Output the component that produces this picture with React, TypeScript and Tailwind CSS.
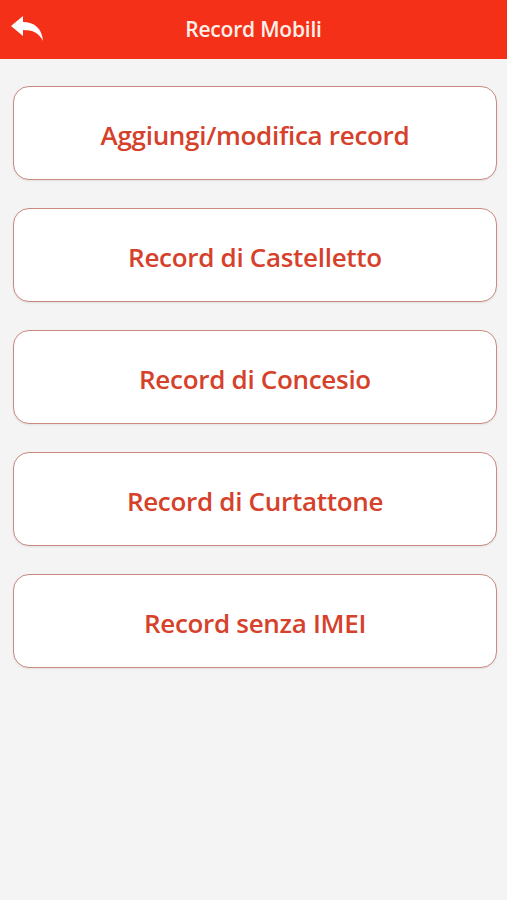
import React from 'react';

const items = [
    'Aggiungi/modifica record',
    'Record di Castelletto',
    'Record di Concesio',
    'Record di Curtattone',
    'Record senza IMEI',
];

const BackIcon = () => (
    <svg width="34" height="26" viewBox="0 0 34 26" fill="#ffffff">
        <path d="M1 10 L13 0 L13 6 C24 6 32 12 33 25 C29 17 23 14 13 14 L13 20 Z" />
    </svg>
);

const App = () => {
    return (
        <div className="min-h-[900px] w-full bg-[#f4f4f4]" style={{ fontFamily: '"Open Sans", "Noto Sans", sans-serif' }}>
            {/* Header */}
            <div className="relative flex h-[59px] items-center justify-center bg-[#f53018]">
                <button className="absolute left-[10px] top-[16px]">
                    <BackIcon />
                </button>
                <span className="text-[21px] font-semibold tracking-[-0.2px] text-[#fdf0ea]">Record Mobili</span>
            </div>

            {/* Buttons */}
            <div className="flex flex-col gap-[28px] px-[13px] pt-[27px] pr-[10px]">
                {items.map((label) => (
                    <button
                        key={label}
                        className="flex h-[94px] w-full items-center justify-center rounded-[16px] border border-[#c98a80] bg-white pt-[4px] shadow-[0_1px_2px_rgba(0,0,0,0.08)]"
                    >
                        <span className="text-[26px] font-semibold tracking-[-0.3px] text-[#d5412a]">{label}</span>
                    </button>
                ))}
            </div>
        </div>
    );
};

export default App;
